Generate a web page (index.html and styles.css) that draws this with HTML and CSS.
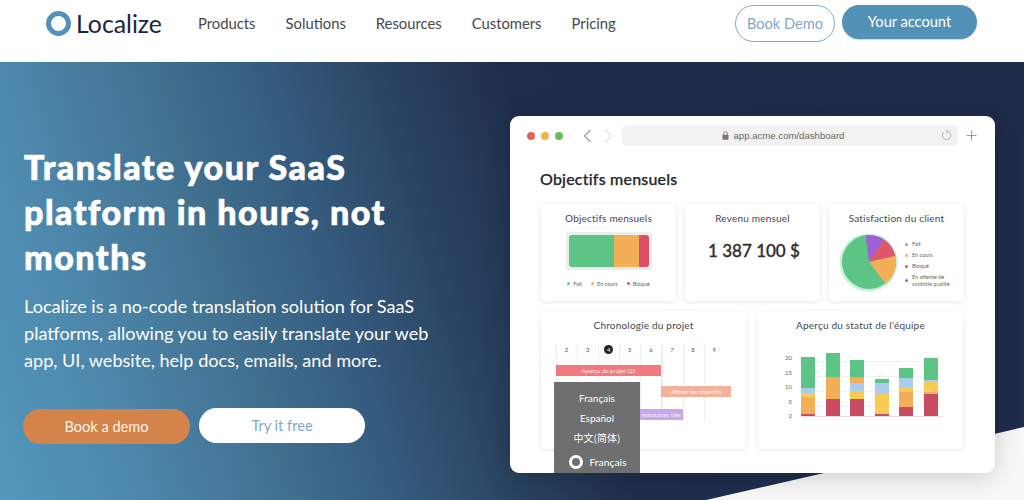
FILE: index.html
```html
<!DOCTYPE html>
<html lang="en">
<head>
    <meta charset="UTF-8">
    <meta name="viewport" content="width=device-width, initial-scale=1.0">
    <title>Localize</title>
    <link rel="stylesheet" href="styles.css">
</head>
<body>
    <header class="topbar">
        <a class="logo"><span class="logoRing"></span>Localize</a>
        <nav class="nav">
            <a>Products</a>
            <a>Solutions</a>
            <a>Resources</a>
            <a>Customers</a>
            <a>Pricing</a>
        </nav>
        <a class="btnOutline">Book Demo</a>
        <a class="btnAccount">Your account</a>
    </header>
    <section class="hero">
        <div class="wedge"></div>
        <div class="intro">
            <h1>Translate your SaaS platform in hours, not months</h1>
            <p>Localize is a no-code translation solution for SaaS platforms, allowing you to easily translate your web app, UI, website, help docs, emails, and more.</p>
            <div class="actions">
                <a class="btnOrange">Book a demo</a>
                <a class="btnWhite">Try it free</a>
            </div>
        </div>
        <div class="window">
            <div class="toolbar">
                <span class="dot red"></span>
                <span class="dot yellow"></span>
                <span class="dot green"></span>
                <svg class="chevron" width="9" height="14" viewBox="0 0 9 14"><path d="M7.5 1 L1.5 7 L7.5 13" fill="none" stroke="#9a9a9a" stroke-width="1.1"/></svg>
                <svg class="chevron" width="9" height="14" viewBox="0 0 9 14"><path d="M1.5 1 L7.5 7 L1.5 13" fill="none" stroke="#e2e2e2" stroke-width="1.1"/></svg>
                <div class="urlBar">
                    <svg class="lock" width="7" height="9" viewBox="0 0 7 9"><path d="M1.6 4 V2.6 a1.9 1.9 0 0 1 3.8 0 V4" fill="none" stroke="#777" stroke-width="0.9"/><rect x="0.5" y="3.8" width="6" height="5" rx="0.8" fill="#777"/></svg>
                    <span>app.acme.com/dashboard</span>
                    <svg class="reload" width="11" height="11" viewBox="0 0 11 11"><path d="M6.6 1.3 A4.2 4.2 0 1 1 3 2" fill="none" stroke="#a8a8a8" stroke-width="0.9"/><path d="M4.8 0 L6.9 1.3 L5 2.9" fill="none" stroke="#a8a8a8" stroke-width="0.8"/></svg>
                </div>
                <svg class="plus" width="11" height="11" viewBox="0 0 11 11"><path d="M5.5 0.5 V10.5 M0.5 5.5 H10.5" stroke="#9a9a9a" stroke-width="1.1"/></svg>
            </div>
            <h2>Objectifs mensuels</h2>
            <div class="rowTop">
                <div class="card">
                    <h3>Objectifs mensuels</h3>
                    <div class="progress">
                        <div class="progressInner">
                            <span class="segGreen"></span>
                            <span class="segOrange"></span>
                            <span class="segRed"></span>
                        </div>
                    </div>
                    <div class="legend">
                        <span><i class="bullet bgGreen"></i>Fait</span>
                        <span><i class="bullet bgOrange"></i>En cours</span>
                        <span><i class="bullet bgRed"></i>Bloqué</span>
                    </div>
                </div>
                <div class="card">
                    <h3>Revenu mensuel</h3>
                    <div class="revenue">1 387 100 $</div>
                </div>
                <div class="card">
                    <h3>Satisfaction du client</h3>
                    <div class="pieRow">
                        <svg class="pie" width="60" height="60" viewBox="-30 -30 60 60">
                            <circle cx="-0.4" cy="0.4" r="29" fill="#c9efd9"/>
                            <circle r="27" fill="#5cc485"/>
                            <path d="M0 0 L-3.3 -26.8 A27 27 0 0 1 15 -22.4 Z" fill="#a25ed6"/>
                            <path d="M0 0 L15 -22.4 A27 27 0 0 1 26.3 -6.1 Z" fill="#e0566b"/>
                            <path d="M0 0 L26.3 -6.1 A27 27 0 0 1 16.5 21.4 Z" fill="#f3ae58"/>
                        </svg>
                        <ul class="pieLegend">
                            <li><i class="bullet bgGreen"></i>Fait</li>
                            <li><i class="bullet bgOrange"></i>En cours</li>
                            <li><i class="bullet bgRed"></i>Bloqué</li>
                            <li><i class="bullet bgPurple"></i>En attente de<br>contrôle qualité</li>
                        </ul>
                    </div>
                </div>
            </div>
            <div class="rowBottom">
                <div class="card timelineCard">
                    <h3>Chronologie du projet</h3>
                    <div class="timeline">
                        <div class="days">
                            <span>2</span><span>3</span><span class="today">4</span><span>5</span><span>6</span><span>7</span><span>8</span><span>9</span>
                        </div>
                        <div class="task taskRed">Aperçu du projet Q3</div>
                        <div class="task taskPeach">Affiner les objectifs</div>
                        <div class="task taskPurple">ressources clés</div>
                    </div>
                </div>
                <div class="card chartCard">
                    <h3>Aperçu du statut de l'équipe</h3>
                    <div class="chart">
                        <div class="axis">
                            <span>20</span><span>15</span><span>10</span><span>5</span><span>2</span>
                        </div>
                        <div class="bars">
                            <div class="bar">
                                <i class="bgGreen" style="height:31px"></i><i class="bgBlue" style="height:5px"></i><i class="bgYellow" style="height:4px"></i><i class="bgOrange" style="height:17px"></i><i class="bgCrimson" style="height:2px"></i>
                            </div>
                            <div class="bar">
                                <i class="bgGreen" style="height:24px"></i><i class="bgOrange" style="height:22px"></i><i class="bgCrimson" style="height:17px"></i>
                            </div>
                            <div class="bar">
                                <i class="bgGreen" style="height:17px"></i><i class="bgOrange" style="height:6px"></i><i class="bgBlue" style="height:8px"></i><i class="bgYellow" style="height:8px"></i><i class="bgCrimson" style="height:17px"></i>
                            </div>
                            <div class="bar">
                                <i class="bgGreen" style="height:4px"></i><i class="bgBlue" style="height:11px"></i><i class="bgYellow" style="height:20px"></i><i class="bgCrimson" style="height:2px"></i>
                            </div>
                            <div class="bar">
                                <i class="bgGreen" style="height:10px"></i><i class="bgBlue" style="height:9px"></i><i class="bgYellow" style="height:5px"></i><i class="bgOrange" style="height:15px"></i><i class="bgCrimson" style="height:9px"></i>
                            </div>
                            <div class="bar">
                                <i class="bgGreen" style="height:22px"></i><i class="bgBlue" style="height:2px"></i><i class="bgYellow" style="height:10px"></i><i class="bgOrange" style="height:2px"></i><i class="bgCrimson" style="height:22px"></i>
                            </div>
                        </div>
                    </div>
                </div>
            </div>
            <div class="langMenu">
                <span>Français</span>
                <span>Español</span>
                <span class="cjk">中文(简体)</span>
                <span class="langCurrent"><i class="langRing"></i>Français</span>
            </div>
        </div>
    </section>
</body>
</html>
```

FILE: styles.css
```css
* {
    box-sizing: border-box;
}
html, body {
    margin: 0;
    height: 500px;
    overflow: hidden;
}
body {
    font-family: Lato, "Open Sans", sans-serif;
    background-color: white;
}

/* top bar */
.topbar {
    height: 62px;
    display: flex;
    align-items: flex-start;
    padding-left: 46px;
    background-color: white;
}
.logo {
    display: flex;
    align-items: center;
    height: 46px;
    width: 152px;
    font-size: 24.8px;
    color: #1b2342;
}
.logoRing {
    width: 25px;
    height: 25px;
    margin-right: 5px;
    border: 5px solid #5392b8;
    border-radius: 50%;
}
.nav {
    display: flex;
    gap: 30px;
    width: 537px;
    height: 46px;
    align-items: center;
    font-size: 14.8px;
    color: #44474f;
}
.btnOutline {
    width: 100px;
    height: 37px;
    margin-top: 5px;
    border: 1px solid #7fa9c6;
    border-radius: 19px;
    font-size: 14.6px;
    line-height: 35px;
    text-align: center;
    color: #7fa9c6;
}
.btnAccount {
    width: 135px;
    height: 34px;
    margin: 5px 0 0 7px;
    border-radius: 17px;
    background-color: #5392b8;
    font-size: 14.6px;
    line-height: 34px;
    text-align: center;
    color: white;
    box-shadow: 0 1px 1px rgba(40, 70, 100, 0.25);
}

/* hero */
.hero {
    position: relative;
    height: 438px;
    display: flex;
    overflow: hidden;
    background: linear-gradient(73deg, #5398bd 0%, #4c86aa 13%, #41708f 25%, #345a7d 35%, #294260 45%, #1f2e4c 55%, #1e2b49 100%);
}
.wedge {
    position: absolute;
    inset: 0;
    background-color: #f8f8f8;
    clip-path: polygon(706px 438px, 1024px 365px, 1024px 438px);
}
.intro {
    position: relative;
    width: 510px;
    padding: 82px 0 0 24px;
    color: white;
}
h1 {
    width: 400px;
    margin: 0;
    font-size: 34px;
    font-weight: 900;
    line-height: 45px;
    letter-spacing: 1.5px;
    -webkit-text-stroke: 0.7px white;
}
.intro p {
    width: 420px;
    margin: 14px 0 0;
    font-size: 18.1px;
    line-height: 27px;
}
.actions {
    display: flex;
    align-items: flex-start;
    gap: 9px;
    margin: 34px 0 0 -1px;
}
.btnOrange {
    width: 167px;
    height: 35px;
    margin-top: 1px;
    border-radius: 18px;
    background-color: #d4844a;
    font-size: 14.6px;
    line-height: 35px;
    text-align: center;
    color: #fdf3e8;
}
.btnWhite {
    width: 166px;
    height: 35px;
    border-radius: 18px;
    background-color: white;
    font-size: 14.6px;
    line-height: 35px;
    text-align: center;
    color: #7fa9c6;
}

/* browser window */
.window {
    position: relative;
    width: 485px;
    height: 357px;
    margin-top: 54px;
    padding: 9px 24px 0 31px;
    border-radius: 9px;
    background-color: white;
    box-shadow: 0 4px 26px rgba(0, 0, 0, 0.18);
}
.toolbar {
    display: flex;
    align-items: center;
    height: 21px;
    margin: 0 -10px 0 -14px;
}
.toolbar > * {
    flex: none;
}
.dot {
    width: 8px;
    height: 8px;
    margin-right: 6px;
    border-radius: 50%;
}
.dot.red { background-color: #e2635a; }
.dot.yellow { background-color: #edb54e; }
.dot.green { background-color: #64bd5c; }
.chevron {
    margin-left: 13.5px;
}
.chevron + .chevron {
    margin-left: 12px;
}
.urlBar {
    position: relative;
    display: flex;
    align-items: center;
    justify-content: center;
    gap: 5px;
    width: 336px;
    height: 21px;
    margin-left: 9.5px;
    padding-right: 14px;
    border-radius: 5px;
    background-color: #f2f2f2;
    font-family: "Liberation Sans", Arial, sans-serif;
    font-size: 9.6px;
    color: #666;
}
.reload {
    position: absolute;
    right: 6px;
    top: 5px;
}
.plus {
    margin-left: 7.5px;
}
h2 {
    margin: 21px 0 0 -1px;
    height: 24px;
    font-size: 16px;
    font-weight: 500;
    line-height: 24px;
    letter-spacing: 0.2px;
    color: #25272c;
    -webkit-text-stroke: 0.25px #25272c;
}
.rowTop {
    display: flex;
    gap: 9px;
    margin-top: 13px;
}
.rowBottom {
    display: flex;
    gap: 12px;
    margin-top: 10px;
}
.card {
    width: 135px;
    height: 97px;
    border-radius: 5px;
    background-color: white;
    box-shadow: 0 1px 5px rgba(0, 0, 0, 0.1);
    padding-top: 8px;
    color: #44474d;
}
h3 {
    margin: 0;
    font-size: 10px;
    font-weight: 400;
    line-height: 13px;
    letter-spacing: 0.2px;
    text-align: center;
}

/* progress card */
.progress {
    width: 86px;
    height: 38px;
    margin: 7px auto 0;
    padding: 3px;
    border-radius: 3px;
    background-color: #ececec;
}
.progressInner {
    display: flex;
    height: 32px;
    border-radius: 3px;
    overflow: hidden;
}
.segGreen { width: 45px; background-color: #5cc485; }
.segOrange { width: 25px; background-color: #f3ae58; }
.segRed { width: 10px; background-color: #dc4d68; }
.legend {
    display: flex;
    justify-content: center;
    gap: 9px;
    margin-top: 10px;
    font-size: 5.5px;
    line-height: 8px;
    color: #666;
}
.bullet {
    display: inline-block;
    width: 3px;
    height: 3px;
    margin-right: 3px;
    border-radius: 50%;
    vertical-align: 1px;
}
.bgGreen { background-color: #5cc485; }
.bgOrange { background-color: #f3ae58; }
.bgRed { background-color: #dc4d68; }
.bgPurple { background-color: #a25ed6; }
.bgBlue { background-color: #a8cdee; }
.bgYellow { background-color: #f7cb55; }
.bgCrimson { background-color: #ca4a63; }

.revenue {
    margin-top: 15px;
    padding-left: 3px;
    font-size: 17px;
    font-weight: 500;
    line-height: 22px;
    text-align: center;
    color: #2b2d33;
    -webkit-text-stroke: 0.3px #2b2d33;
}

/* pie card */
.pieRow {
    display: flex;
    align-items: center;
    margin-top: 6px;
    padding-left: 10px;
}
.pieLegend {
    list-style: none;
    margin: 10px 0 0 6px;
    padding: 0;
    font-size: 5.5px;
    line-height: 7px;
    color: #666;
}
.pieLegend li {
    position: relative;
    padding-left: 7px;
    margin-bottom: 4px;
}
.pieLegend .bullet {
    position: absolute;
    left: 0;
    top: 2px;
}
.pieLegend li:last-child .bullet {
    top: 5px;
}

/* timeline card */
.timelineCard {
    width: 205px;
    height: 138px;
}
.timeline {
    width: 169px;
    height: 76px;
    margin: 13px 0 0 15px;
    background-image: repeating-linear-gradient(90deg, #eeeeee 0, #eeeeee 1px, transparent 1px, transparent 21.1px);
}
.days {
    display: grid;
    grid-template-columns: repeat(8, 21.1px);
    height: 20px;
    font-size: 6px;
    line-height: 9px;
    text-align: center;
    color: #555;
}
.days span {
    justify-self: center;
    align-self: start;
    width: 9px;
    height: 9px;
}
.days .today {
    border-radius: 50%;
    background-color: #222;
    color: white;
}
.task {
    height: 11px;
    font-size: 6px;
    line-height: 11px;
    text-align: center;
    color: rgba(255, 255, 255, 0.85);
}
.taskRed {
    width: 105px;
    background-color: #ef7b80;
}
.taskPeach {
    width: 70px;
    margin: 10px 0 0 105px;
    background-color: #f4b29c;
}
.taskPurple {
    width: 60px;
    margin: 12px 0 0 67px;
    padding-left: 16px;
    background-color: #c7a8e8;
}

/* team chart card */
.chartCard {
    width: 205px;
    height: 138px;
}
.chart {
    display: flex;
    height: 73px;
    margin: 25px 0 0 24px;
}
.axis {
    display: flex;
    flex-direction: column;
    width: 19px;
    margin-top: -3px;
    padding-right: 9px;
    font-size: 6px;
    text-align: right;
    color: #666;
}
.axis span {
    height: 14.5px;
    line-height: 8px;
}
.bars {
    display: flex;
    align-items: flex-end;
    gap: 10.5px;
    width: 142px;
    height: 60px;
    border-bottom: 1px solid #f0d8dc;
    background-image: repeating-linear-gradient(180deg, #f1f1f1 0, #f1f1f1 1px, transparent 1px, transparent 15px);
    background-position: 0 4px;
}
.bar {
    width: 14px;
    display: flex;
    flex-direction: column;
}
.bar i {
    display: block;
}

/* language menu over the dashboard */
.langMenu {
    position: absolute;
    left: 44px;
    top: 266px;
    width: 86px;
    height: 91px;
    display: flex;
    flex-direction: column;
    align-items: center;
    padding-top: 6px;
    background-color: #6f6f6f;
    font-size: 10px;
    line-height: 20px;
    color: white;
}
.cjk {
    font-family: "Noto Sans CJK SC", Lato, sans-serif;
}
.langCurrent {
    display: flex;
    align-items: center;
    margin: 4px 0 0 2px;
    font-size: 10.4px;
}
.langRing {
    width: 14px;
    height: 14px;
    margin-right: 6px;
    border: 3px solid white;
    border-radius: 50%;
}
```
